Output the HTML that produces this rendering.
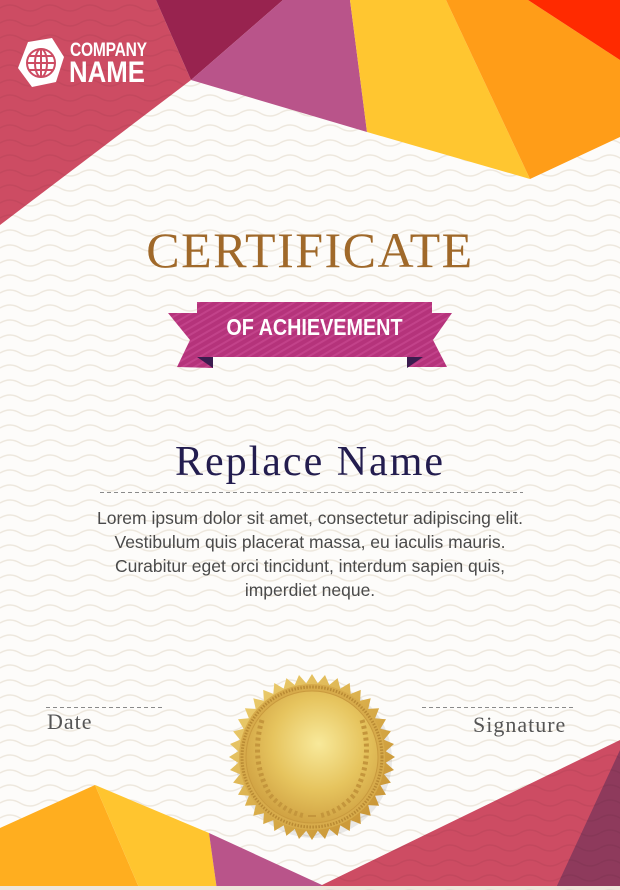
<!DOCTYPE html>
<html><head><meta charset="utf-8">
<style>
html,body{margin:0;padding:0;}
body{width:620px;height:890px;position:relative;overflow:hidden;background:#fdfcfa;}
svg{position:absolute;left:0;top:0;}
.t{position:absolute;white-space:nowrap;}
</style></head>
<body>
<svg width="620" height="890" viewBox="0 0 620 890">
<defs>
<pattern id="wv" width="40" height="15" patternUnits="userSpaceOnUse">
<path d="M0 8 Q10 2 20 8 T40 8" fill="none" stroke="#eee8de" stroke-width="1.5"/>
</pattern>
<pattern id="wv2" width="40" height="15" patternUnits="userSpaceOnUse">
<path d="M0 8 Q10 2 20 8 T40 8" fill="none" stroke="#000" stroke-opacity="0.05" stroke-width="1.6"/>
</pattern>
<pattern id="str" width="6" height="6" patternUnits="userSpaceOnUse" patternTransform="rotate(-30)">
<rect width="6" height="6" fill="#b5337b"/>
<rect width="6" height="2" fill="#c2428a"/>
</pattern>
<radialGradient id="gold" cx="0.55" cy="0.4" r="0.7">
<stop offset="0" stop-color="#f8e99a"/>
<stop offset="0.5" stop-color="#e6c45e"/>
<stop offset="1" stop-color="#c9973a"/>
</radialGradient>
<linearGradient id="gold2" x1="0" y1="0" x2="1" y2="1">
<stop offset="0" stop-color="#f0d577"/>
<stop offset="0.5" stop-color="#d9ad4a"/>
<stop offset="1" stop-color="#c48e30"/>
</linearGradient>
</defs>
<rect width="620" height="890" fill="#fdfcfa"/>
<rect width="620" height="890" fill="url(#wv)"/>
<polygon points="0,0 156,0 191,80 0,225" fill="#cd4c63"/>
<polygon points="156,0 283,0 191,80" fill="#98234f"/>
<polygon points="191,80 283,0 350,0 367,132" fill="#b9548a"/>
<polygon points="350,0 446,0 530,179 367,132" fill="#ffc630"/>
<polygon points="446,0 528,0 620,60 620,137 530,179" fill="#ff9d18"/>
<polygon points="528,0 620,0 620,60" fill="#ff2a00"/>
<polygon points="0,828 95,785 140,890 0,890" fill="#ffae1f"/>
<polygon points="95,785 209,833 217,890 140,890" fill="#ffc52f"/>
<polygon points="209,833 322,885 322,890 217,890" fill="#b9548a"/>
<polygon points="322,885 620,740 620,890 315,890" fill="#cd4c63"/>
<polygon points="620,750 620,890 555,890" fill="#8e3a5c"/>
<rect y="886" width="620" height="4" fill="#efe6dc"/>
<polygon points="0,0 156,0 191,80 0,225" fill="url(#wv2)"/>
<polygon points="322,885 620,740 620,890 315,890" fill="url(#wv2)"/>
<polygon points="28,42 52,38 64,57 56,82 32,87 18,68" fill="#fff"/>
<g fill="none" stroke="#cd4c63" stroke-width="2">
<circle cx="41" cy="63" r="14"/>
<ellipse cx="41" cy="63" rx="6" ry="14"/>
<line x1="41" y1="49" x2="41" y2="77"/>
<line x1="27" y1="63" x2="55" y2="63"/>
<line x1="29" y1="56" x2="53" y2="56"/>
<line x1="29" y1="70" x2="53" y2="70"/>
</g>
<polygon points="168,313 210,313 213,368 177,367 190,340" fill="url(#str)"/>
<polygon points="452,313 410,313 407,367 447,367 433,340" fill="url(#str)"/>
<polygon points="197,357 213,357 213,368" fill="#3b1c4f"/>
<polygon points="423,357 407,357 407,368" fill="#3b1c4f"/>
<rect x="197" y="302" width="235" height="55" fill="url(#str)"/>
<line x1="100" y1="492.5" x2="523" y2="492.5" stroke="#8a8a8a" stroke-dasharray="4 3"/>
<line x1="46" y1="707.5" x2="165" y2="707.5" stroke="#8a8a8a" stroke-dasharray="4 3"/>
<line x1="422" y1="707.5" x2="573" y2="707.5" stroke="#8a8a8a" stroke-dasharray="4 3"/>
<g id="seal">
<circle cx="314" cy="760" r="78" fill="#000" opacity="0.08"/>
<polygon id="teeth" fill="url(#gold2)" points=""/>
<circle cx="312" cy="757" r="73" fill="#d7ab4b"/>
<circle cx="312" cy="757" r="70" fill="none" stroke="#b98a33" stroke-width="3" stroke-dasharray="1.5 1.5"/>
<circle cx="312" cy="757" r="66" fill="url(#gold)"/>
<circle cx="312" cy="757" r="66" fill="none" stroke="#c99a3e" stroke-width="1"/>
<g fill="none" stroke="#c4963c" stroke-width="5" stroke-dasharray="3 3">
<path d="M262 720 Q250 760 270 795 Q285 812 305 816"/>
<path d="M362 720 Q374 760 354 795 Q339 812 319 816"/>
</g>
<line x1="308" y1="816" x2="316" y2="816" stroke="#c4963c" stroke-width="2"/>
</g>
</svg>
<script>
(function(){var p=[],n=40,cx=312,cy=757;for(var i=0;i<n*2;i++){var a=i*Math.PI/n,r=(i%2?74:83);p.push((cx+r*Math.cos(a)).toFixed(1)+','+(cy+r*Math.sin(a)).toFixed(1));}document.getElementById('teeth').setAttribute('points',p.join(' '));})();
</script>
<div class="t" style="left:70px;top:40px;color:#fff;font:bold 19px 'Liberation Sans',sans-serif;transform:scaleX(.82);transform-origin:left top;letter-spacing:-0.3px;">COMPANY</div>
<div class="t" style="left:69px;top:56px;color:#fff;font:bold 30px 'Liberation Sans',sans-serif;transform:scaleX(.86);transform-origin:left top;">NAME</div>
<div class="t" style="left:0;width:620px;text-align:center;top:221px;color:#a0692a;font:50px 'Liberation Serif',serif;letter-spacing:1.5px;">CERTIFICATE</div>
<div class="t" style="left:197px;width:235px;text-align:center;top:314px;color:#fff;font:bold 23px 'Liberation Sans',sans-serif;"><span style="display:inline-block;transform:scaleX(.86);">OF ACHIEVEMENT</span></div>
<div class="t" style="left:0;width:620px;text-align:center;top:438px;color:#231d4f;font:42px 'Liberation Serif',serif;letter-spacing:2px;">Replace Name</div>
<div class="t" style="left:0;width:620px;text-align:center;top:506px;color:#4a4a4a;font:17.5px/24px 'Liberation Sans',sans-serif;">Lorem ipsum dolor sit amet, consectetur adipiscing elit.<br>Vestibulum quis placerat massa, eu iaculis mauris.<br>Curabitur eget orci tincidunt, interdum sapien quis,<br>imperdiet neque.</div>
<div class="t" style="left:47px;top:709px;color:#555;font:22px 'Liberation Serif',serif;letter-spacing:1px;">Date</div>
<div class="t" style="left:473px;top:712px;color:#555;font:22px 'Liberation Serif',serif;letter-spacing:1px;">Signature</div>
</body></html>
